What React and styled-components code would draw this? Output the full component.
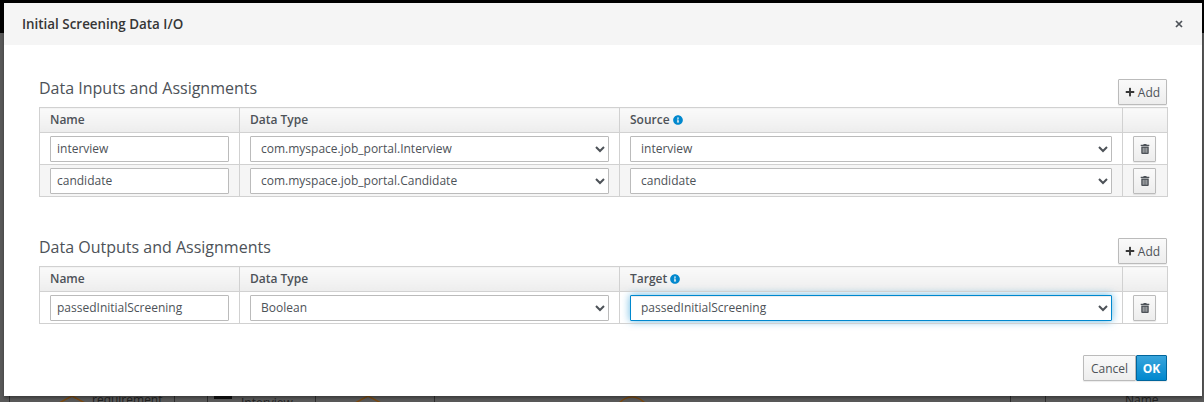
import React from "react";
import styled, { createGlobalStyle, css } from "styled-components";
import { FaInfoCircle, FaPlus, FaTrashAlt } from "react-icons/fa";

const GlobalStyle = createGlobalStyle`
  html, body {
    margin: 0;
    padding: 0;
    background: #595959;
  }
  body {
    font-family: "Open Sans", "Liberation Sans", sans-serif;
    font-size: 12px;
    color: #363636;
  }
`;

const inputs = [
  { name: "interview", type: "com.myspace.job_portal.Interview" },
  { name: "candidate", type: "com.myspace.job_portal.Candidate" },
];

const outputs = [
  { name: "passedInitialScreening", type: "Boolean", focused: true },
];

// borders of the diagram boxes that show under the modal
const peekLines = [9, 174, 207, 315, 434, 1010, 1045];

export default function App() {
  return (
    <>
      <GlobalStyle />
      <Page>
        <Canvas>
          {peekLines.map((x) => (
            <PeekLine key={x} style={{ left: x }} />
          ))}
          <PeekText style={{ left: 92, top: 392 }}>requirement</PeekText>
          <PeekText style={{ left: 241, top: 395 }}>Interview</PeekText>
          <PeekText style={{ left: 1125, top: 392 }}>Name</PeekText>
          <PeekDiamond viewBox="0 0 26 6" style={{ left: 59, top: 396 }}>
            <path d="M0 7 L13 0 L26 7" />
          </PeekDiamond>
          <PeekDiamond viewBox="0 0 26 6" style={{ left: 355, top: 396 }}>
            <path d="M0 7 L13 0 L26 7" />
          </PeekDiamond>
          <PeekDiamond viewBox="0 0 26 6" style={{ left: 619, top: 396 }}>
            <path d="M0 7 Q13 -5 26 7" />
          </PeekDiamond>
          <PeekBar />
        </Canvas>
        <Modal>
          <ModalHeader>
            <Title>Initial Screening Data I/O</Title>
            <CloseButton aria-label="Close">
              <svg width="8" height="8" viewBox="0 0 8 8">
                <path d="M1 1 L7 7 M7 1 L1 7" stroke="#4d5258" strokeWidth="1.7" />
              </svg>
            </CloseButton>
          </ModalHeader>
          <ModalBody>
            <Section
              title="Data Inputs and Assignments"
              mapLabel="Source"
              rows={inputs}
            />
            <Section
              title="Data Outputs and Assignments"
              mapLabel="Target"
              rows={outputs}
              second
            />
          </ModalBody>
          <Footer>
            <Button>Cancel</Button>
            <PrimaryButton>OK</PrimaryButton>
          </Footer>
        </Modal>
      </Page>
    </>
  );
}

const Section = ({ title, mapLabel, rows, second }) => {
  return (
    <SectionWrap $second={second}>
      <SectionHead>
        <SectionTitle>{title}</SectionTitle>
        <AddButton>
          <FaPlus size={10} />
          Add
        </AddButton>
      </SectionHead>
      <Table>
        <colgroup>
          <col style={{ width: 200 }} />
          <col style={{ width: 380 }} />
          <col style={{ width: 503 }} />
          <col style={{ width: 45 }} />
        </colgroup>
        <thead>
          <tr>
            <Th>Name</Th>
            <Th>Data Type</Th>
            <Th>
              {mapLabel} <InfoIcon />
            </Th>
            <Th />
          </tr>
        </thead>
        <tbody>
          {rows.map((row) => (
            <Row key={row.name}>
              <Td>
                <TextInput defaultValue={row.name} />
              </Td>
              <Td>
                <Select defaultValue={row.type}>
                  <option>{row.type}</option>
                </Select>
              </Td>
              <Td>
                <Select defaultValue={row.name} $focused={row.focused}>
                  <option>{row.name}</option>
                </Select>
              </Td>
              <Td>
                <TrashButton aria-label="Remove">
                  <FaTrashAlt size={10} />
                </TrashButton>
              </Td>
            </Row>
          ))}
        </tbody>
      </Table>
    </SectionWrap>
  );
};

const Page = styled.div`
  position: relative;
  box-sizing: border-box;
  width: 1204px;
  height: 402px;
  overflow: hidden;
  padding: 3px 2px 6px 4px;
  background: linear-gradient(#000 0 33px, #595959 33px);
`;

const Canvas = styled.div`
  position: absolute;
  inset: 0;
`;

const PeekLine = styled.div`
  position: absolute;
  top: 392px;
  width: 1px;
  height: 10px;
  background: #2e2e2e;
`;

const PeekText = styled.span`
  position: absolute;
  font-size: 12px;
  line-height: 16px;
  color: #222;
`;

const PeekDiamond = styled.svg`
  position: absolute;
  width: 26px;
  height: 6px;
  fill: none;
  stroke: #7a4a12;
  stroke-width: 1.5;
`;

const PeekBar = styled.div`
  position: absolute;
  left: 214px;
  top: 396px;
  width: 18px;
  height: 3px;
  background: #111;
`;

const Modal = styled.div`
  position: relative;
  display: flex;
  flex-direction: column;
  height: 393px;
  background: #fff;
  box-shadow: 0 2px 3px rgba(0, 0, 0, 0.35);
`;

const ModalHeader = styled.header`
  display: flex;
  align-items: center;
  justify-content: space-between;
  box-sizing: border-box;
  height: 42px;
  padding: 0 19px 0 18px;
  background: #f5f5f5;
`;

const Title = styled.h4`
  margin: 0;
  font-size: 13.4px;
  font-weight: 600;
  color: #363636;
`;

const CloseButton = styled.button`
  display: flex;
  padding: 0;
  border: 0;
  background: none;
`;

const ModalBody = styled.div`
  flex: 1;
  padding: 33px 35px 0;
`;

const SectionWrap = styled.section`
  margin-top: ${(p) => (p.$second ? "40px" : "0")};
`;

const SectionHead = styled.div`
  display: flex;
  align-items: flex-end;
  justify-content: space-between;
  height: 27px;
  margin-bottom: 2px;
`;

const SectionTitle = styled.h3`
  margin: 0 0 7px;
  font-size: 16px;
  font-weight: 400;
  line-height: 20px;
  color: #4d5258;
`;

const Footer = styled.footer`
  display: flex;
  justify-content: flex-end;
  padding: 0 35px 15px 0;
`;

const buttonBase = css`
  box-sizing: border-box;
  height: 26px;
  border: 1px solid #bbb;
  border-radius: 1px;
  background: linear-gradient(#fafafa, #ededed);
  font-family: inherit;
  font-size: 12px;
  color: #4d5258;
  box-shadow: 0 1px 1px rgba(3, 3, 3, 0.08);
`;

const Button = styled.button`
  ${buttonBase}
  width: 53px;
  padding: 0;
`;

const PrimaryButton = styled.button`
  ${buttonBase}
  width: 31px;
  padding: 0;
  border-color: #00659c;
  background: linear-gradient(#39a5dc, #0088ce);
  color: #fff;
  font-weight: 700;
`;

const AddButton = styled.button`
  ${buttonBase}
  display: flex;
  align-items: center;
  justify-content: center;
  gap: 3px;
  width: 49px;
  padding: 0;

  svg {
    color: #363636;
  }
`;

const TrashButton = styled.button`
  ${buttonBase}
  display: flex;
  align-items: center;
  justify-content: center;
  width: 23px;
  height: 26px;
  padding: 0;

  svg {
    color: #4d5258;
  }
`;

const Table = styled.table`
  box-sizing: border-box;
  width: 1128px;
  table-layout: fixed;
  border-collapse: collapse;
  border: 1px solid #d1d1d1;
`;

const Th = styled.th`
  box-sizing: border-box;
  height: 25px;
  padding: 0 10px 2px;
  border: 1px solid #d1d1d1;
  background: linear-gradient(#fafafa, #ededed);
  font-size: 12px;
  font-weight: 600;
  text-align: left;
  color: #4d5258;
`;

const InfoIcon = styled(FaInfoCircle)`
  width: 10px;
  height: 10px;
  vertical-align: -1px;
  color: #0088ce;
`;

const Row = styled.tr`
  &:nth-child(even) {
    background: #f5f5f5;
  }
`;

const Td = styled.td`
  box-sizing: border-box;
  height: 32px;
  padding: 2px 10px;
  border: 1px solid #d1d1d1;
`;

const fieldBase = css`
  display: block;
  box-sizing: border-box;
  width: 100%;
  height: 26px;
  border: 1px solid #bbb;
  border-radius: 1px;
  background-color: #fff;
  font-family: inherit;
  font-size: 12px;
  color: #4d5258;
  outline: none;
`;

const TextInput = styled.input`
  ${fieldBase}
  padding: 2px 6px;
`;

const Select = styled.select`
  ${fieldBase}
  padding: 2px 6px;
  ${(p) =>
    p.$focused &&
    css`
      border-color: #0088ce;
      box-shadow: inset 0 1px 1px rgba(3, 3, 3, 0.075),
        0 0 8px rgba(0, 136, 206, 0.6);
    `}
`;
